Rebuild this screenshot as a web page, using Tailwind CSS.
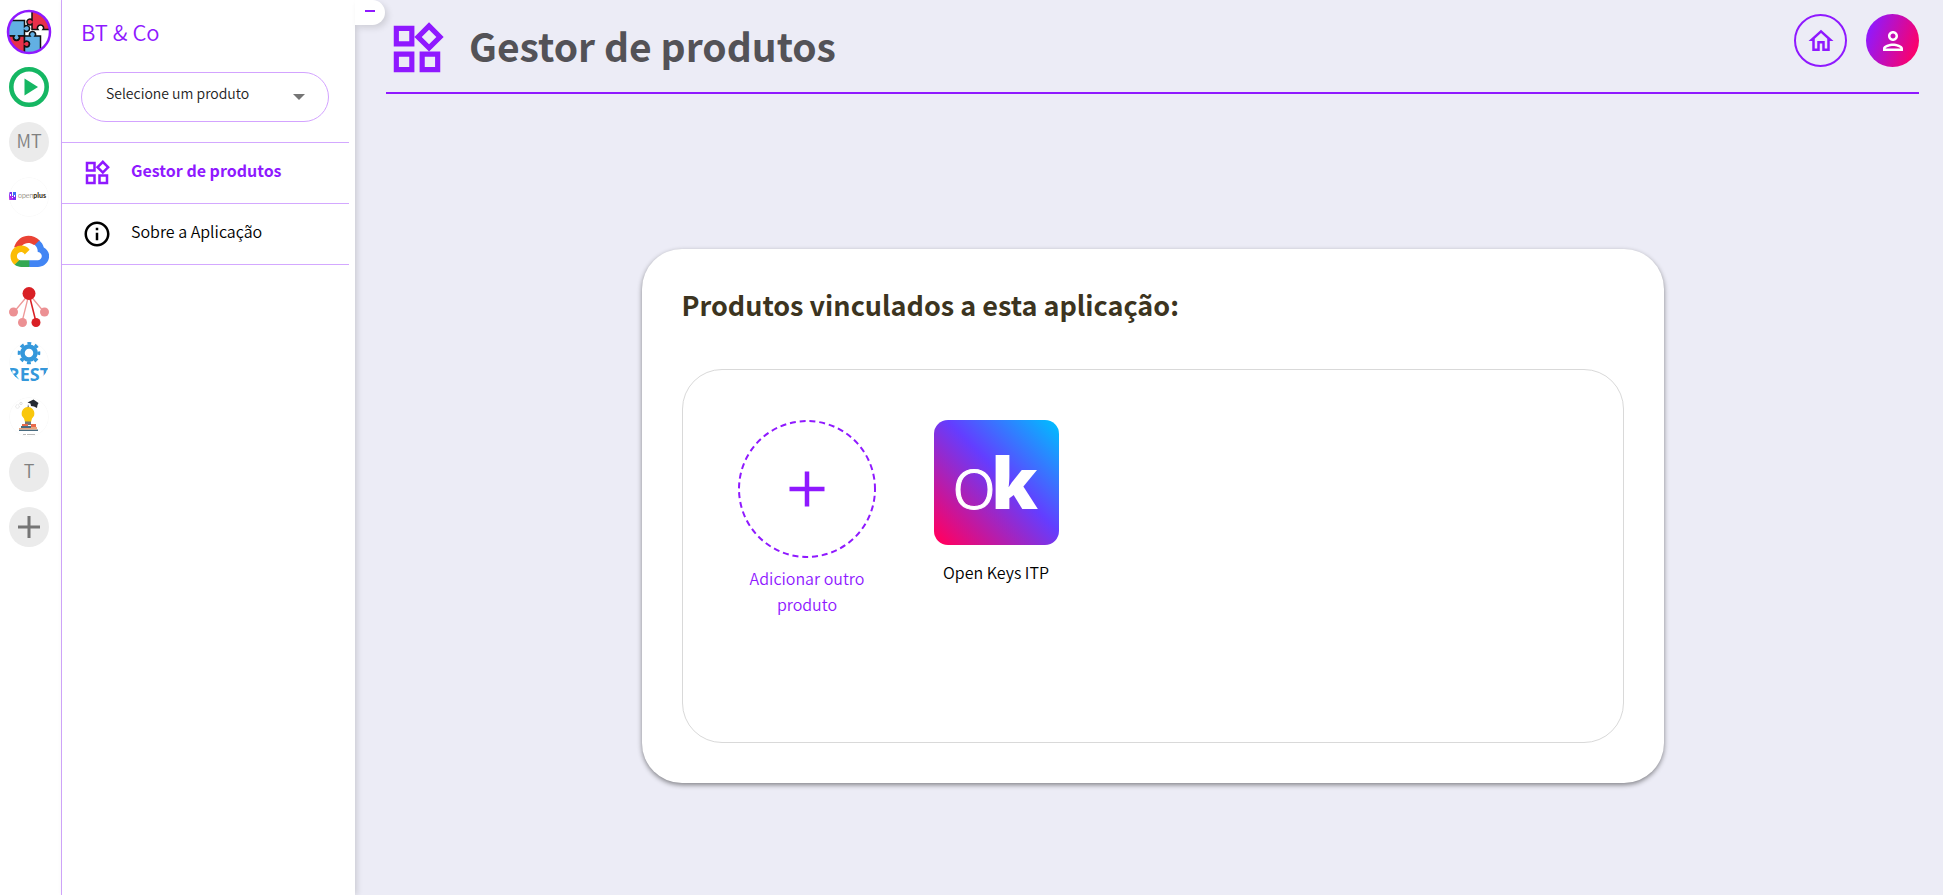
<!DOCTYPE html>
<html lang="pt-BR">
<head>
  <meta charset="UTF-8" />
  <meta name="viewport" content="width=device-width, initial-scale=1.0" />
  <title>BT & Co - Gestor de produtos</title>
  <script src="https://cdn.jsdelivr.net/npm/@tailwindcss/browser@4"></script>
</head>
<body class="bg-[#ececf6] font-['Noto_Sans_CJK_JP',sans-serif] font-[350] text-black">

  <!-- Widgets icon, shared by menu and header -->
  <svg class="hidden">
    <symbol id="widgets" viewBox="0 0 24 24">
      <path fill="currentColor" d="m16.66 4.52 2.83 2.83-2.83 2.83-2.83-2.83 2.83-2.83M9 5v4H5V5h4m10 10v4h-4v-4h4M9 15v4H5v-4h4m7.66-13.31L11 7.34 16.66 13l5.66-5.66-5.66-5.65zM11 3H3v8h8V3zm10 10h-8v8h8v-8zm-10 0H3v8h8v-8z" />
    </symbol>
  </svg>

  <div class="flex min-h-screen">

    <!-- Apps -->
    <nav class="w-[62px] shrink-0 bg-white border-r border-[#d3a8ff] pt-3 pr-[3px] flex flex-col items-center gap-[15px]">
      <a href="#" aria-label="BT & Co" class="h-10 flex items-center">
        <svg class="size-[46px] shrink-0" viewBox="0 0 46 46">
          <defs><clipPath id="c1"><circle cx="23" cy="23" r="21" /></clipPath></defs>
          <circle cx="23" cy="23" r="21" fill="#fff" />
          <g clip-path="url(#c1)" stroke="#111" stroke-width="1.5">
            <path fill="#62b0e3" d="M2 11.500h16.500v6c2-2 5.500-.5 5 2.300-.3 2.700-3 3.500-5 1.700v5.500h-5.500c1.500 2-.2 4.500-2.500 4.500s-4-2.500-2.500-4.500H0z" />
            <path fill="#e8304a" d="M0 27h8c-1.500 2 .2 4.500 2.500 4.500S14.500 29 13 27h5.500v6c2-2 5.500-.5 5 2.300-.3 2.700-3 3.500-5 1.700v9H0z" />
            <path fill="#e8304a" d="M26 0v11c-2-2-5.500-.5-5 2.300.3 2.700 3 3.500 5 1.700v5.500h6c-1.500-2 .2-4.500 2.500-4.500s4 2.500 2.500 4.500h9V0z" />
            <path fill="#62b0e3" d="M18.500 27H24c-1.500-2 .2-4.500 2.500-4.500S30.500 25 29 27h5.500v19h-16v-9c2 1.800 4.700 1 5-1.700.5-2.800-3-4.300-5-2.300z" />
          </g>
          <circle cx="23" cy="23" r="21" fill="none" stroke="#8f19ff" stroke-width="2.500" />
        </svg>
      </a>
      <a href="#" aria-label="Player">
        <svg class="size-10" viewBox="0 0 40 40">
          <circle cx="20" cy="20" r="17.7" fill="#fff" stroke="#15b763" stroke-width="4.6" />
          <path fill="#15b763" d="M15.5 11.5v17L29 20z" />
        </svg>
      </a>
      <a href="#" class="size-10 rounded-full bg-[#ebebeb] text-[#808080] text-lg leading-9 text-center">MT</a>
      <a href="#" aria-label="openplus">
        <svg class="size-10 rounded-full" viewBox="0 0 40 40">
          <circle cx="20" cy="20" r="19.5" fill="none" stroke="#fafafa" />
          <path fill="#7b2ff0" d="M0 15h3v4H0zM4 19h3v4H4z" />
          <path fill="#b42be8" d="M0 19h4v4H0z" />
          <path fill="#3f6df5" d="M4 15h3v4H4z" />
          <path fill="#fff" d="M3 15h1v2H3zM1 17h1v2H1zM3 20h1v1H3zM5 18h1v2H5z" />
          <text x="9" y="21" font-family="Lato" font-size="7" fill="#3c3420">open<tspan font-weight="900">plus</tspan></text>
        </svg>
      </a>
      <a href="#" aria-label="Cloud">
        <svg class="size-10" viewBox="0 0 40 40">
          <path fill="#ea4335" d="m26.400 13 1.200 0 3-3.200.1-1.300C25.700 3.300 17 2 11 6.500 8 8.800 6 12 5 15.500l1-.2 6.500-1 .5-.5c3-3.300 8-3.700 11.400-1z" />
          <path fill="#4285f4" d="M34.800 15.500c-.7-2.800-2.300-5.200-4.500-7l-4.600 4.600c1.900 1.500 3 3.800 3 6.200v.8c2.200 0 4.100 1.900 4.100 4.100s-1.900 4.100-4.100 4.100H20.500l-.8.8v5.100l.8.700h8.200c5 .1 9.600-3.100 11-7.900 1.500-4.700-.6-9-4.900-11.500z" />
          <path fill="#34a853" d="M12.200 34.900h8.200v-6.600h-8.200c-.6 0-1.200-.1-1.700-.4l-1.200.4-3.300 3.300-.3 1.100c1.900 1.400 4.200 2.200 6.500 2.200z" />
          <path fill="#fbbc04" d="M12.200 13.600C7.600 13.600 3.600 16.500 2.100 20.800c-1.500 4.300-.1 9.100 3.500 11.900l4.800-4.800c-2.100-.9-3-3.400-2.100-5.400.9-2.100 3.400-3 5.400-2.100.9.400 1.700 1.200 2.100 2.100l4.800-4.800c-2-2.600-5.100-4.100-8.400-4.100z" />
        </svg>
      </a>
      <a href="#" aria-label="Grafo">
        <svg class="size-10" viewBox="0 0 40 40">
          <path d="M20 7 5 25M20 7l15 18M20 7l-7 28" stroke="#e99" stroke-width="1.300" />
          <path d="m20 7 7 28" stroke="#d92025" stroke-width="1.500" />
          <circle cx="20" cy="6.500" r="6.500" fill="#d92025" />
          <g fill="#ec9093">
            <circle cx="4.500" cy="25" r="4.500" /><circle cx="35.500" cy="25" r="4.500" /><circle cx="13.500" cy="35.500" r="4.500" />
          </g>
          <circle cx="27" cy="35.500" r="4.500" fill="#d92025" />
        </svg>
      </a>
      <a href="#" aria-label="REST">
        <svg class="size-10 rounded-full" viewBox="0 0 40 40">
          <circle cx="20" cy="20" r="19.5" fill="none" stroke="#fafafa" />
          <circle cx="20" cy="11" r="6.500" fill="none" stroke="#3498db" stroke-width="4.500" />
          <circle cx="20" cy="11" r="9.800" fill="none" stroke="#3498db" stroke-width="3" stroke-dasharray="3.900 3.797" stroke-dashoffset="1.950" />
          <text x="20" y="39" text-anchor="middle" font-family="Open Sans" font-size="18" font-weight="700" fill="#3498db">REST</text>
        </svg>
      </a>
      <a href="#" aria-label="Ideias">
        <svg class="size-10 rounded-full" viewBox="0 0 40 40">
          <circle cx="20" cy="20" r="19.5" fill="none" stroke="#fafafa" />
          <circle cx="8.500" cy="9.500" r="1.800" fill="none" stroke="#ddd" stroke-dasharray="1 .6" />
          <circle cx="12" cy="6.500" r="1.200" fill="none" stroke="#ddd" />
          <path fill="#f9c70c" d="M19 10a6.500 6.500 0 0 1 4 11.500L22 25h-6l-1-3.500A6.500 6.500 0 0 1 19 10z" />
          <path fill="#777" d="M16 24.500h6V28h-6z" />
          <path fill="#252a33" d="m18.500 5.500 6-3 5 3.500-1 2-.5 3-3-1.500-3-.5-.5-2.500zM19 7l.7 3-1 .2z" />
          <path fill="#e96b4c" d="M13 27h6v2h-6zM22 27h5v3h-5z" />
          <path fill="#476b80" d="M12 29h10v2H12zM10 32.500h19V34H10z" />
          <path fill="#e9a57e" d="M10 31h12v1.500H10zM22 30h6v2.500h-6z" />
          <path stroke="#bbb" d="M14 37.500h3M18 37.500h8" />
        </svg>
      </a>
      <a href="#" class="size-10 rounded-full bg-[#ebebeb] text-[#808080] text-lg leading-9 text-center">T</a>
      <button type="button" aria-label="Adicionar aplicação" class="size-10 rounded-full bg-[#ebebeb] flex items-center justify-center">
        <svg class="size-[22px]" viewBox="0 0 22 22"><path d="M11 0v22M0 11h22" stroke="#757575" stroke-width="3" /></svg>
      </button>
    </nav>

    <!-- Menu -->
    <aside class="relative z-10 w-[293px] shrink-0 bg-white shadow-[2px_0_6px_rgba(0,0,0,0.14)]">
      <div class="pl-[19px] pr-[26px] pt-[15px]">
        <h2 class="text-[22px] leading-8 text-[#8f19ff]">BT &amp; Co</h2>
        <div class="relative mt-[25px]">
          <select aria-label="Selecione um produto" class="appearance-none w-full h-[50px] rounded-full border border-[#d3a3ff] bg-white pl-6 pr-12 pb-2 text-sm text-[#222]">
            <option>Selecione um produto</option>
            <option>Open Keys ITP</option>
          </select>
          <svg class="pointer-events-none absolute right-6 top-[22px] w-3 h-[6px]" viewBox="0 0 12 6"><path fill="#757575" d="M0 0h12L6 6z" /></svg>
        </div>
      </div>
      <ul class="mt-5 mr-[6px] border-t border-[#d3a8ff]">
        <li class="border-b border-[#d3a8ff]">
          <a href="#" class="h-[60px] pl-5 flex items-center text-[#8f19ff] font-bold">
            <svg class="size-[30px]"><use href="#widgets" /></svg>
            <span class="ml-[19px] pb-[6px]">Gestor de produtos</span>
          </a>
        </li>
        <li class="border-b border-[#d3a8ff]">
          <a href="#" class="h-[60px] pl-5 flex items-center">
            <svg class="size-[30px]" viewBox="0 0 24 24"><path fill="currentColor" d="M11 7h2v2h-2zm0 4h2v6h-2zm1-9C6.480 2 2 6.480 2 12s4.480 10 10 10 10-4.480 10-10S17.520 2 12 2zm0 18c-4.410 0-8-3.590-8-8s3.590-8 8-8 8 3.590 8 8-3.590 8-8 8z" /></svg>
            <span class="ml-[19px] pb-[6px]">Sobre a Aplicação</span>
          </a>
        </li>
      </ul>
      <button type="button" aria-label="Recolher menu" class="absolute left-full top-0 w-[30px] h-[25px] bg-white rounded-r-full shadow-[3px_3px_6px_rgba(0,0,0,0.12)]">
        <span class="block w-[10px] h-[2px] ml-[10px] -mt-[3px] bg-[#8f19ff]"></span>
      </button>
    </aside>

    <!-- Content -->
    <main class="flex-1 pl-[31px] pr-6">
      <header class="h-[94px] border-b-2 border-[#8f19ff] flex justify-between">
        <div class="flex items-center">
          <svg class="size-[62px] text-[#8f19ff] mt-[6px]"><use href="#widgets" /></svg>
          <h1 class="ml-[21px] pb-[3px] text-[39px] leading-[60px] font-bold text-[#535257]">Gestor de produtos</h1>
        </div>
        <div class="flex gap-[19px] pt-[14px]">
          <a href="#" aria-label="Início" class="size-[53px] rounded-full border-2 border-[#8f19ff] text-[#8f19ff] flex items-center justify-center">
            <svg class="size-[30px]" viewBox="0 0 24 24"><path fill="currentColor" d="m12 5.690 5 4.500V18h-2v-6H9v6H7v-7.810l5-4.500M12 3 2 12h3v8h6v-6h2v6h6v-8h3L12 3z" /></svg>
          </a>
          <button type="button" aria-label="Perfil" class="size-[53px] rounded-full bg-linear-[110deg,#8f19ff_10%,#ff0066_90%] text-white flex items-center justify-center">
            <svg class="size-[30px]" viewBox="0 0 24 24"><path fill="currentColor" d="M12 6c1.100 0 2 .9 2 2s-.9 2-2 2-2-.9-2-2 .9-2 2-2m0 10c2.700 0 5.800 1.290 6 2H6c.23-.72 3.310-2 6-2m0-12C9.790 4 8 5.790 8 8s1.790 4 4 4 4-1.790 4-4-1.790-4-4-4zm0 10c-2.670 0-8 1.340-8 4v2h16v-2c0-2.660-5.330-4-8-4z" /></svg>
          </button>
        </div>
      </header>

      <section class="w-2/3 mx-auto mt-[155px] p-10 bg-white rounded-[40px] shadow-[0_2px_5px_rgba(0,0,0,0.45)]">
        <h2 class="text-[27px] leading-8 font-bold text-[#3c3420]">Produtos vinculados a esta aplicação:</h2>
        <div class="mt-12 min-h-[374px] border border-[#d9d9d9] rounded-[40px] pt-[50px] px-[30px] grid grid-cols-[repeat(auto-fill,189px)]">
          <button type="button" class="self-start flex flex-col items-center text-[#8f19ff]">
            <svg class="size-[138px]" viewBox="0 0 138 138">
              <circle cx="69" cy="69" r="68" fill="none" stroke="currentColor" stroke-width="2" stroke-dasharray="6 3.860" stroke-dashoffset="3" />
              <path d="M69 51.500v35M51.500 69h35" stroke="currentColor" stroke-width="4.500" />
            </svg>
            <span class="w-32 mt-[7px] leading-[26px]">Adicionar outro produto</span>
          </button>
          <a href="#" class="self-start flex flex-col items-center">
            <svg class="size-[125px] rounded-[14px]" viewBox="0 0 125 125">
              <defs>
                <linearGradient id="ok" x1="0" y1="1" x2="1" y2="0">
                  <stop offset=".04" stop-color="#ff0062" /><stop offset=".55" stop-color="#643dff" /><stop offset=".98" stop-color="#00bcff" />
                </linearGradient>
              </defs>
              <rect width="125" height="125" fill="url(#ok)" />
              <text x="18" y="89" fill="#fff"><tspan font-family="Lato" font-size="79" font-weight="300" stroke="#fff">o</tspan><tspan x="57" font-family="Open Sans" font-size="71" font-weight="800">k</tspan></text>
            </svg>
            <span class="mt-[14px] leading-[26px]">Open Keys ITP</span>
          </a>
        </div>
      </section>
    </main>
  </div>

</body>
</html>
